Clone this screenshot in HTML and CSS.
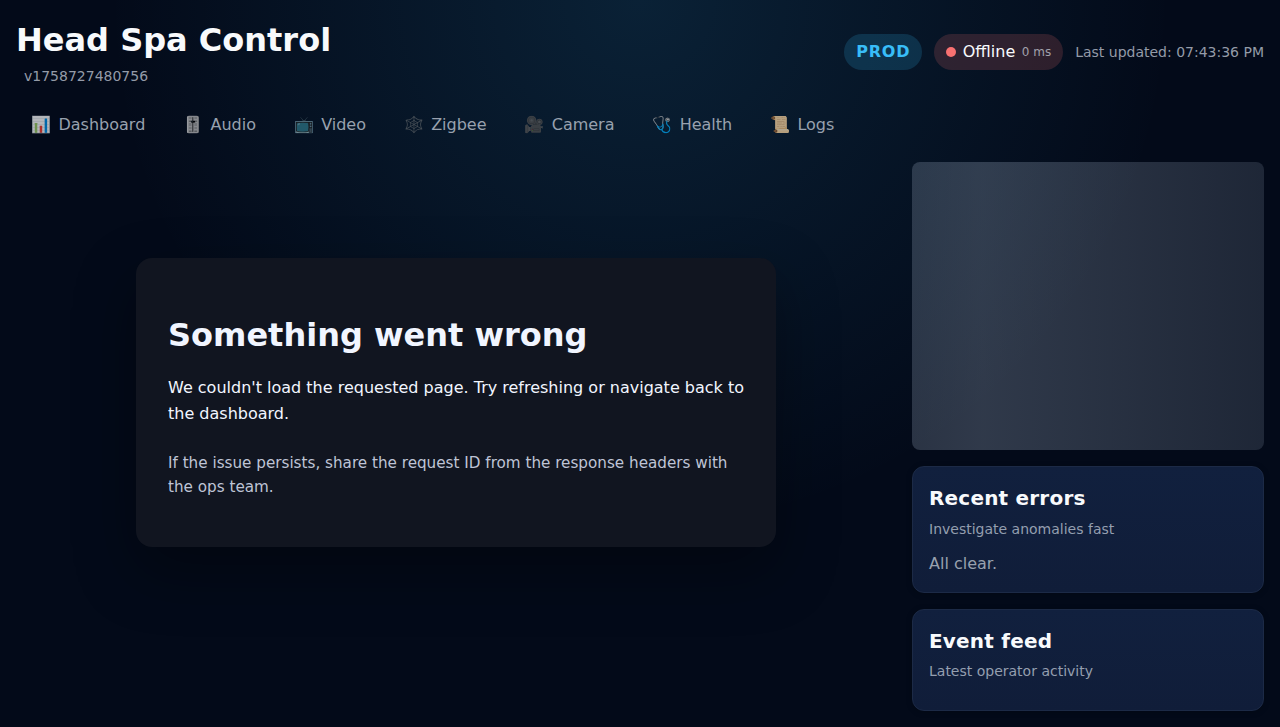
FILE: index.html
```html
<!DOCTYPE html>
<html lang="en">
<head>
<meta charset="utf-8">
<title>Head Spa Control</title>
<link rel="stylesheet" href="styles.css">
</head>
<body>
<header class="topbar">
  <div class="brand">
    <h1 class="title">Head Spa Control</h1>
    <span class="version">v1758727480756</span>
  </div>
  <div class="status">
    <span class="env">PROD</span>
    <span class="conn"><i class="dot"></i><span>Offline</span><small class="latency">0 ms</small></span>
    <span class="updated">Last updated: 07:43:36 PM</span>
  </div>
</header>
<nav class="nav">
  <a class="link"><span class="icon">📊</span>Dashboard</a>
  <a class="link"><span class="icon">🎚️</span>Audio</a>
  <a class="link"><span class="icon">📺</span>Video</a>
  <a class="link"><span class="icon">🕸️</span>Zigbee</a>
  <a class="link"><span class="icon">🎥</span>Camera</a>
  <a class="link"><span class="icon">🩺</span>Health</a>
  <a class="link"><span class="icon">📜</span>Logs</a>
</nav>
<div class="layout">
  <main class="main">
    <section class="error">
      <h2 class="error-title">Something went wrong</h2>
      <p class="error-text">We couldn't load the requested page. Try refreshing or navigate back to the dashboard.</p>
      <p class="error-hint">If the issue persists, share the request ID from the response headers with the ops team.</p>
    </section>
  </main>
  <aside class="side">
    <div class="skeleton"></div>
    <section class="card errors">
      <h3 class="card-title">Recent errors</h3>
      <p class="card-sub">Investigate anomalies fast</p>
      <p class="empty">All clear.</p>
    </section>
    <section class="card feed">
      <h3 class="card-title">Event feed</h3>
      <p class="card-sub">Latest operator activity</p>
    </section>
  </aside>
</div>
</body>
</html>
```
FILE: styles.css
```css
* { box-sizing: border-box; }
body {
  margin: 0;
  height: 727px;
  overflow: hidden;
  color: #f8fafc;
  font: 16px/1.5 "DejaVu Sans", sans-serif;
  background: radial-gradient(circle at top, rgba(56, 189, 248, 0.13), transparent 55%), #030a19;
}
h1, h2, h3, p { margin: 0; }
.topbar { display: flex; justify-content: space-between; align-items: center; padding: 16px; height: 104px; }
.brand { display: flex; flex-direction: column; }
.title { font-size: 32px; line-height: 48px; }
.version { padding-left: 8px; font-size: 14px; line-height: 24px; color: #949ba8; }
.status { display: flex; align-items: center; gap: 12px; }
.env { padding: 5px 12px; height: 36px; line-height: 26px; border-radius: 18px; background: rgba(56, 189, 248, 0.17); color: #38bdf8; font-weight: 700; letter-spacing: 0.8px; }
.conn { display: flex; align-items: center; gap: 6.5px; height: 36px; padding: 0 12px; border-radius: 18px; background: rgba(248, 113, 113, 0.17); }
.dot { width: 10px; height: 10px; border-radius: 50%; background: #f87171; }
.latency { font-size: 12px; color: #a1a0ab; }
.updated { font-size: 14px; color: #949ba8; }
.nav { display: flex; gap: 7.69px; padding: 0 16px; height: 42px; }
.link { display: flex; align-items: center; gap: 7.49px; padding: 0 15px; color: #98a1ae; }
.icon { opacity: 0.7; }
.layout { display: grid; grid-template-columns: 880px 352px; gap: 16px; padding: 16px; }
.main { padding: 96px 120px 0; }
.error { height: 289px; padding: 49px 32px 0; border-radius: 16px; background: #111520; box-shadow: 0 24px 60px rgba(0, 0, 0, 0.35); }
.error-title { font-size: 32px; line-height: 56px; margin-bottom: 12px; color: #f1f5ff; }
.error-text { line-height: 26px; margin-bottom: 24px; color: #f1f5ff; }
.error-hint { font-size: 15.2px; line-height: 24px; color: #bfc4d6; }
.side { display: flex; flex-direction: column; gap: 16px; }
.skeleton { height: 288px; border-radius: 8px; background: linear-gradient(90deg, rgba(148, 163, 184, 0.27), rgba(148, 163, 184, 0.31) 20%, rgba(148, 163, 184, 0.19)); }
.card { padding: 16px; border: 1px solid #1c2a46; border-radius: 12px; background: linear-gradient(#11203e, #101d39); box-shadow: 0 1px 6px rgba(0, 0, 0, 0.2); }
.errors { height: 127px; }
.feed { height: 102px; }
.card-title { font-size: 20px; line-height: 30px; letter-spacing: 0.2px; }
.card-sub { font-size: 14px; line-height: 21px; margin-top: 5px; color: #949eaf; }
.errors .card-sub { margin-top: 6px; }
.empty { margin-top: 12px; color: #98a1ae; }
```
